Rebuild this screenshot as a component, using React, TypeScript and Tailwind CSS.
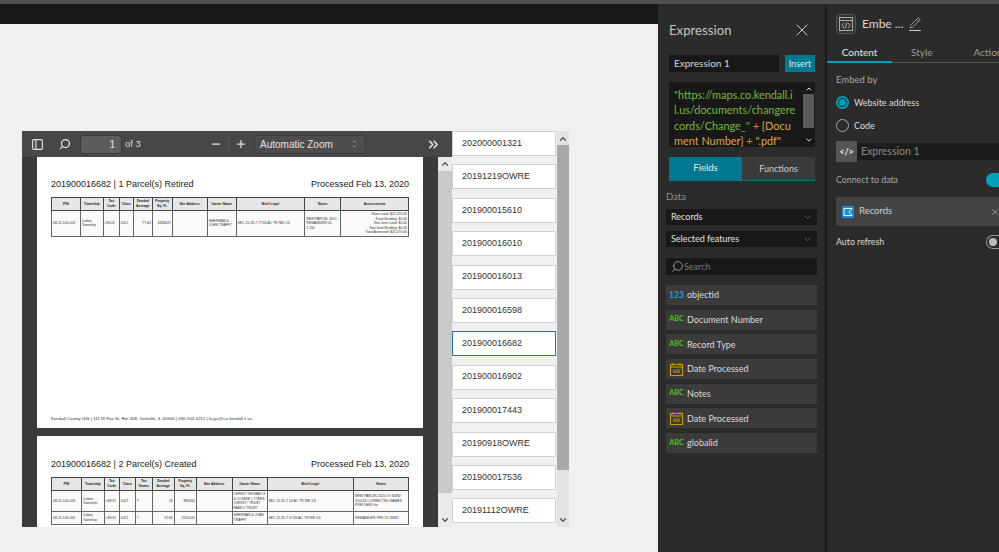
import React from 'react';
import { ChevronDown, ChevronUp, ChevronsRight, Minus, PanelLeft, Pencil, Plus, Search, X } from 'lucide-react';

const records = [
  '202000001321',
  '20191219OWRE',
  '201900015610',
  '201900016010',
  '201900016013',
  '201900016598',
  '201900016682',
  '201900016902',
  '201900017443',
  '20190918OWRE',
  '201900017536',
  '20191112OWRE',
];

const firstWidths = [29, 23, 16, 14, 19, 20, 35, 29, 69, 36, 68];
const secondWidths = [30, 23, 15, 16, 17, 22, 22, 36, 35, 87, 55];

const firstHead = ['PIN', 'Township', 'Tax Code', 'Class', 'Deeded Acreage', 'Property Sq. Ft.', 'Site Address', 'Owner Name', 'Brief Legal', 'Notes', 'Assessments'];
const secondHead = ['PIN', 'Township', 'Tax Code', 'Class', 'Tax Status', 'Deeded Acreage', 'Property Sq. Ft.', 'Site Address', 'Owner Name', 'Brief Legal', 'Notes'];

const firstRows = [
  [
    '08-25-100-003',
    'Lisbon Township',
    'LE013',
    '0021',
    '77.84',
    '3438029',
    '',
    'SHERMAN & JOHN TRAFFT',
    'SEC 25-35-7 77.84 AC TR NW 1/4',
    'NEW PARCEL 2001 - REMAINDER 03-1.700',
    'Farm Land: $21,070.00\nFarm Building: $0.00\nNon-farm Land: $0.00\nNon-farm Building: $0.00\nTotal Assessed: $21,070.00',
  ],
];

const secondRows = [
  ['08-25-100-006', 'Lisbon Township', 'LE013', '0021', 'T', '20', '882000', '', 'CHRIST THOMAS G & CONNIE L TTEES CHRIST / TRUST FAMILY TRUST', 'SEC 25-35-7 20 AC TR NW 1/4', 'NEW PARCEL 2020 19-16682 3/10/20 CORRECTED NAMES PRM DEED for'],
  ['08-25-100-005', 'Lisbon Township', 'LE013', '0021', 'T', '57.84', '2555520', '', 'SHERMAN & JOAN TRAFFT', 'SEC 25-35-7 47.84 AC TR NW 1/4', 'REMAINDER PER 19-16682'],
];

const rightAligned = (head: string) => head === 'Deeded Acreage' || head === 'Property Sq. Ft.' || head === 'Assessments';

const ParcelTable = ({ widths, head, rows }: { widths: number[]; head: string[]; rows: string[][] }) => (
  <table className="table-fixed border-collapse border border-[#444] font-['Liberation_Sans',sans-serif] text-[3.4px] leading-[4.6px] text-[#333]">
    <colgroup>
      {widths.map((w, i) => (
        <col key={i} style={{ width: w }} />
      ))}
    </colgroup>
    <thead>
      <tr className="h-[13px] bg-[#e6e6e6]">
        {head.map((h) => (
          <th key={h} className="border border-[#444] px-px text-center font-bold text-[#222]">
            {h}
          </th>
        ))}
      </tr>
    </thead>
    <tbody>
      {rows.map((row, i) => (
        <tr key={i} className="bg-[#fafafa]">
          {row.map((cell, j) => (
            <td
              key={j}
              className={`border border-[#666] px-px py-[1px] whitespace-pre-line ${rightAligned(head[j]) ? 'text-right' : 'text-left'}`}
            >
              {cell}
            </td>
          ))}
        </tr>
      ))}
    </tbody>
  </table>
);

const PdfPage = ({ title, widths, head, rows, footer }: { title: string; widths: number[]; head: string[]; rows: string[][]; footer?: boolean }) => (
  <div className={`mx-[15px] flex h-[271px] w-[386px] shrink-0 flex-col bg-white px-[14px] pb-[7px] font-['Liberation_Sans',sans-serif] ${footer ? 'pt-[21px]' : 'pt-[22px]'}`}>
    <div className="flex justify-between text-[9px] leading-[13px] text-[#222]">
      <span>{title}</span>
      <span>Processed Feb 13, 2020</span>
    </div>
    <div className="mt-[6px]">
      <ParcelTable widths={widths} head={head} rows={rows} />
    </div>
    {footer && (
      <div className="mt-auto text-[4.4px] leading-[5px] whitespace-nowrap text-[#333]">
        Kendall County GIS | 111 W Fox St, Rm 308, Yorkville, IL 60560 | 630.553.4212 | kcgis@co.kendall.il.us
      </div>
    )}
  </div>
);

const PdfViewer = () => (
  <div className="flex h-[396px] w-[430px] shrink-0 flex-col">
    <div className="flex h-[26px] shrink-0 items-center bg-[#474747] font-['Liberation_Sans',sans-serif] text-[#e4e4e4]">
      <PanelLeft size={13} strokeWidth={2} className="ml-[9px]" />
      <Search size={12} strokeWidth={2.5} className="ml-[15px] -scale-x-100" />
      <div className="ml-[9px] flex h-[19px] w-[42px] items-center justify-end rounded-sm border border-[#3a3a3a] bg-[#5c5c5c] pr-[6px] text-[10px]">1</div>
      <span className="ml-[3px] w-[85px] text-[9.5px] whitespace-nowrap text-[#d8d8d8]">of 3</span>
      <Minus size={12} strokeWidth={2.5} />
      <div className="mx-[6px] h-[14px] w-px bg-[#5a5a5a]" />
      <Plus size={12} strokeWidth={2.5} />
      <div className="ml-[7px] flex h-[19px] w-[112px] items-center justify-between rounded-sm border border-[#3a3a3a] bg-[#4d4d4d] pr-[8px] pl-[5px] text-[10px]">
        <span>Automatic Zoom</span>
        <span className="flex flex-col">
          <ChevronUp size={5} strokeWidth={3} />
          <ChevronDown size={5} strokeWidth={3} />
        </span>
      </div>
      <ChevronsRight size={15} strokeWidth={2.5} className="ml-[60px]" />
    </div>
    <div className="flex min-h-0 flex-1">
      <div className="flex w-[416px] shrink-0 flex-col gap-[8px] overflow-hidden bg-[#3b3b3b]">
        <PdfPage title="201900016682 | 1 Parcel(s) Retired" widths={firstWidths} head={firstHead} rows={firstRows} footer />
        <PdfPage title="201900016682 | 2 Parcel(s) Created" widths={secondWidths} head={secondHead} rows={secondRows} />
      </div>
      <div className="flex w-[14px] flex-col items-center bg-[#eaeaea] pt-[2px] pb-[2px] text-[#555]">
        <ChevronUp size={10} strokeWidth={3} />
        <div className="mt-[2px] h-[322px] w-full bg-[#c9c9c9]" />
        <ChevronDown size={10} strokeWidth={3} className="mt-auto" />
      </div>
    </div>
  </div>
);

const ListPanel = () => (
  <div className="flex h-[396px] shrink-0">
    <div className="flex w-[104px] flex-col gap-[8.4px] overflow-hidden font-['Liberation_Sans',sans-serif]">
      {records.map((r) => (
        <div
          key={r}
          className={`flex h-[25px] shrink-0 items-center border bg-white pl-[9px] text-[9px] text-[#333] ${r === '201900016682' ? 'border-[#2f6fb5]' : 'border-[#d0d0d0]'}`}
        >
          {r}
        </div>
      ))}
    </div>
    <div className="ml-px flex w-[12px] flex-col items-center bg-[#e3e3e3] pt-[3px] pb-[2px] text-[#555]">
      <ChevronUp size={10} strokeWidth={3} />
      <div className="mt-[1px] h-[325px] w-full bg-[#a9a9a9]" />
      <ChevronDown size={10} strokeWidth={3} className="mt-auto" />
    </div>
  </div>
);

const CalendarIcon = () => (
  <svg width="13" height="13" viewBox="0 0 13 13" fill="none" stroke="#d19a00" strokeWidth="1">
    <rect x="0.5" y="1.5" width="12" height="11" />
    <path d="M0.5 4h12M3 0v2.5M10 0v2.5" />
    <path d="M3 6.5h7v3.5H3z" fill="#8a6a10" stroke="none" />
  </svg>
);

const fields: { kind: string; label: string }[] = [
  { kind: '123', label: 'objectid' },
  { kind: 'ABC', label: 'Document Number' },
  { kind: 'ABC', label: 'Record Type' },
  { kind: 'date', label: 'Date Processed' },
  { kind: 'ABC', label: 'Notes' },
  { kind: 'date', label: 'Date Processed' },
  { kind: 'ABC', label: 'globalid' },
];

const FieldRow = ({ kind, label }: { kind: string; label: string }) => (
  <div className="flex h-[20px] items-center bg-[#3b3b3b] text-[9px] text-[#dcdcdc]">
    <span className="flex w-[21px] items-center justify-center">
      {kind === 'date' ? (
        <CalendarIcon />
      ) : kind === '123' ? (
        <span className="text-[8.5px] font-bold text-[#1e9be0]">123</span>
      ) : (
        <span className="text-[7.2px] font-bold text-[#4ec21a]">ABC</span>
      )}
    </span>
    {label}
  </div>
);

const SelectBox = ({ label }: { label: string }) => (
  <div className="flex h-[16px] items-center justify-between bg-[#181818] pr-[5px] pl-[5px] text-[9px] text-[#e2e2e2]">
    {label}
    <ChevronDown size={9} strokeWidth={1.5} className="text-[#999]" />
  </div>
);

const ExpressionPanel = () => (
  <div className="flex h-full w-[167px] shrink-0 flex-col bg-[#2b2b2b] font-['Lato',sans-serif]">
    <div className="mt-[15px] flex h-[22px] items-center justify-between pr-[13px] pl-[11px]">
      <span className="text-[13.2px] leading-[17px] text-[#c4c4c4]">Expression</span>
      <X size={20} strokeWidth={1.1} className="text-[#d8d8d8]" />
    </div>
    <div className="mt-[14px] flex gap-[6px] pl-[11px]">
      <div className="flex h-[17px] w-[110px] items-center bg-[#181818] pl-[5px] text-[10px] text-[#d8d8d8]">Expression 1</div>
      <div className="flex h-[17px] w-[30px] items-center justify-center bg-[#00788f] text-[9px] text-[#e8e8e8]">Insert</div>
    </div>
    <div className="mt-[10px] ml-[11px] flex h-[65px] w-[146px] bg-[#181818]">
      <div className="w-[133px] pt-[5px] pl-[5px] text-[10.9px] leading-[15.3px] whitespace-nowrap text-[#76b83a]">
        <div>"https://maps.co.kendall.i</div>
        <div>l.us/documents/changere</div>
        <div>
          cords/Change_"<span className="text-[#d8862a]"> + </span>
          <span className="text-[#d9a84a]">{'{'}Docu</span>
        </div>
        <div className="text-[#d9a84a]">
          ment Number{'}'}<span className="text-[#d8862a]"> + </span>".pdf"
        </div>
      </div>
      <div className="flex w-[13px] flex-col items-center py-[3px] text-[#ddd]">
        <ChevronUp size={8} strokeWidth={3} />
        <div className="mt-[1px] h-[34px] w-[11px] bg-[#5a5a5a]" />
        <ChevronDown size={8} strokeWidth={3} className="mt-auto" />
      </div>
    </div>
    <div className="mt-[10px] ml-[11px] flex h-[24px] w-[146px] border-b border-[#00788f] text-[9.5px]">
      <div className="flex w-[73px] items-center justify-center bg-[#00788f] text-[#e8e8e8]">Fields</div>
      <div className="flex w-[73px] items-center justify-center bg-[#3a3a3a] text-[9px] text-[#cfcfcf]">Functions</div>
    </div>
    <div className="mt-[10px] pl-[8px] text-[9.5px] leading-[12px] text-[#8f8f8f]">Data</div>
    <div className="mt-[6px] ml-[8px] flex w-[151px] flex-col gap-[6px] self-start">
      <SelectBox label="Records" />
      <SelectBox label="Selected features" />
      <div className="mt-[5px] flex h-[17px] items-center bg-[#181818] pl-[5px] text-[9px] text-[#7a7a7a]">
        <Search size={13} strokeWidth={1.2} className="-scale-x-100 text-[#d0d0d0]" />
        Search
      </div>
      <div className="mt-[4px] flex flex-col gap-[4.7px]">
        {fields.map((f, i) => (
          <FieldRow key={i} kind={f.kind} label={f.label} />
        ))}
      </div>
    </div>
  </div>
);

const SettingsPanel = () => (
  <div className="flex h-full min-w-0 flex-1 flex-col overflow-hidden border-l-2 border-[#1d1d1d] bg-[#2b2b2b] font-['Lato',sans-serif] text-[#d8d8d8]">
    <div className="flex items-center pt-[10px] pl-[9px]">
      <div className="flex h-[20px] w-[20px] items-center justify-center rounded-sm border border-[#555] bg-[#333]">
        <svg width="14" height="14" viewBox="0 0 14 14" fill="none" stroke="#c8c8c8" strokeWidth="0.8">
          <rect x="0.5" y="0.5" width="13" height="13" />
          <path d="M0.5 3.5h13M5 6l-2 2.5 2 2.5M9 6l2 2.5-2 2.5M8 5.5l-2 6" />
        </svg>
      </div>
      <span className="ml-[6px] text-[12px] leading-[16px]">Embe ...</span>
      <span className="ml-[6px] border-b border-[#ccc] pb-px">
        <Pencil size={12} strokeWidth={1.2} />
      </span>
    </div>
    <div className="mt-[9px] flex h-[20px] w-[180px] shrink-0 items-center border-b border-[#555] text-[10px]">
      <div className="flex h-[20px] w-[65px] items-center justify-center border-b-2 border-[#00a0b8] pt-[1px] text-[#e6e6e6]">Content</div>
      <div className="ml-[19px] text-[#9a9a9a]">Style</div>
      <div className="ml-[41px] whitespace-nowrap text-[#9a9a9a]">Action</div>
    </div>
    <div className="mt-[10px] pl-[9px] text-[9.5px] leading-[13px] text-[#a8a8a8]">Embed by</div>
    <div className="mt-[10px] flex items-center gap-[5px] pl-[9px] text-[9px] leading-[12px] text-[#dcdcdc]">
      <span className="flex h-[13px] w-[13px] items-center justify-center rounded-full border-2 border-[#00a0b8]">
        <span className="h-[7px] w-[7px] rounded-full bg-[#00a0b8]" />
      </span>
      Website address
    </div>
    <div className="mt-[10px] flex items-center gap-[5px] pl-[9px] text-[9px] leading-[12px] text-[#dcdcdc]">
      <span className="h-[13px] w-[13px] rounded-full border border-[#aaa]" />
      Code
    </div>
    <div className="mt-[9px] ml-[9px] flex h-[21px] shrink-0 items-stretch">
      <div className="flex w-[21px] shrink-0 items-center justify-center bg-[#555] text-[9px] font-bold text-[#eee]">{'</>'}</div>
      <div className="mt-[2px] flex h-[17px] flex-1 items-center bg-[#1c1c1c] pl-[4px] text-[10.5px] text-[#8a8a8a]">Expression 1</div>
    </div>
    <div className="mt-[11px] flex items-center justify-between pl-[9px] text-[8.8px] leading-[14px] text-[#a8a8a8]">
      Connect to data
      <span className="h-[14px] w-[13px] rounded-l-full bg-[#00a0b8]" />
    </div>
    <div className="mt-[10px] ml-[9px] flex h-[29px] shrink-0 items-center justify-between bg-[#444] pl-[6px] text-[9.5px] text-[#cfcfcf]">
      <span className="flex items-center gap-[5px]">
        <svg width="12" height="12" viewBox="0 0 12 12">
          <rect width="12" height="12" fill="#1e90d8" />
          <path d="M2 2.5h8l-3 3.5 3 3.5H2z" fill="none" stroke="#dff1fb" strokeWidth="1" />
        </svg>
        Records
      </span>
      <X size={10} strokeWidth={1.5} className="mr-[-1px] text-[#bbb]" />
    </div>
    <div className="mt-[9px] flex items-center justify-between pl-[9px] text-[8.8px] leading-[14px] text-[#dcdcdc]">
      Auto refresh
      <span className="flex h-[14px] w-[13px] items-center rounded-l-full border border-r-0 border-[#999] pl-[2px]">
        <span className="h-[8px] w-[8px] rounded-full bg-[#bbb]" />
      </span>
    </div>
  </div>
);

export default function App() {
  return (
    <div className="flex h-[552px] w-[999px] flex-col overflow-hidden bg-[#f0f0f0]">
      <div className="h-[4px] shrink-0 bg-[#505050]" />
      <div className="flex min-h-0 flex-1">
        <div className="flex w-[658px] shrink-0 flex-col">
          <div className="h-[20px] shrink-0 bg-[#181818]" />
          <div className="flex pt-[107px] pl-[22px]">
            <PdfViewer />
            <ListPanel />
          </div>
        </div>
        <ExpressionPanel />
        <SettingsPanel />
      </div>
    </div>
  );
}
